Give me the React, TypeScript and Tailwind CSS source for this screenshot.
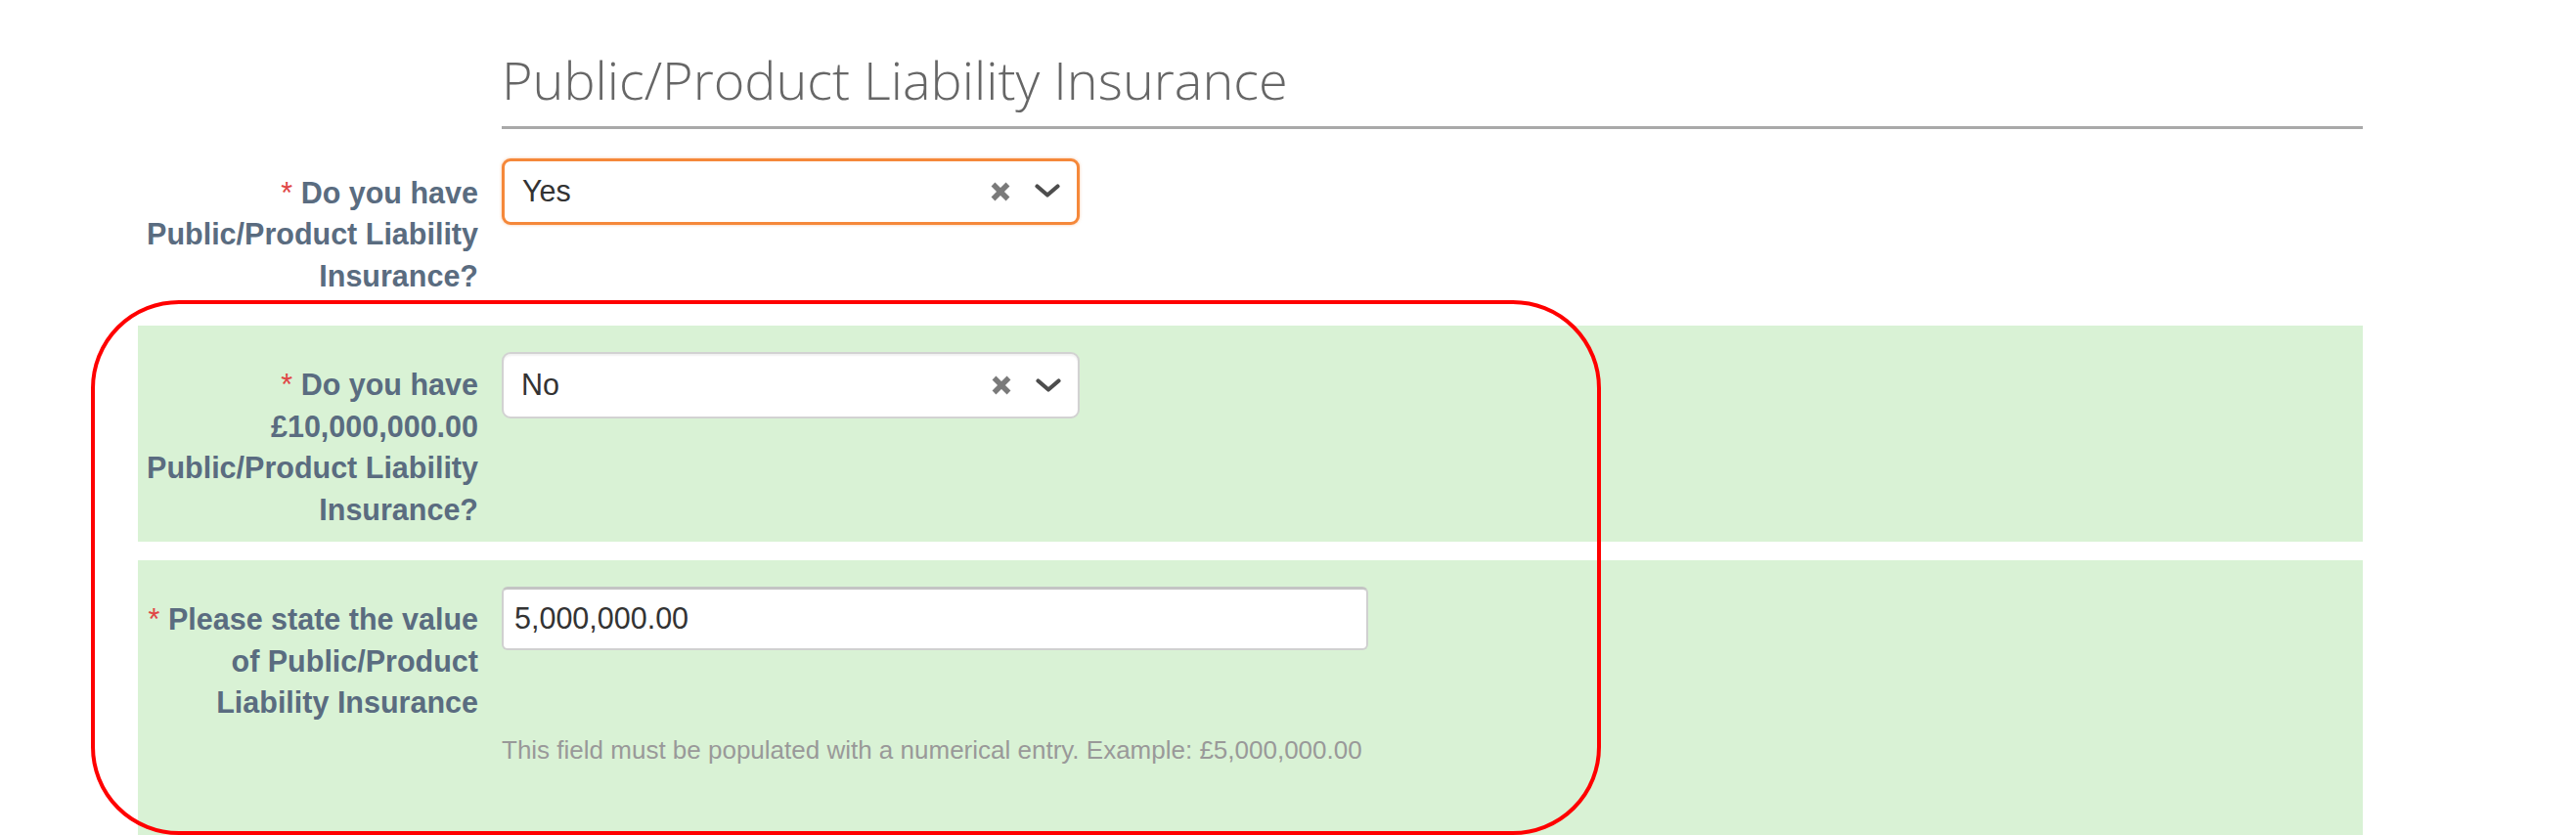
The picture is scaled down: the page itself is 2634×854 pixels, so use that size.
const LABEL = "text-right font-bold text-[30.5px] leading-[42.5px] text-[#5a6c80]";

function Required() {
  return <span className="text-[#e04646] font-normal">* </span>;
}

function ClearChevron() {
  return (
    <div className="ml-auto flex items-center gap-[24px]">
      <svg width="22" height="22" viewBox="0 0 22 22" className="text-[#7a7a7a]">
        <path d="M3.5 3.5 L18.5 18.5 M18.5 3.5 L3.5 18.5" stroke="currentColor" strokeWidth="5.5" />
      </svg>
      <svg width="26" height="15" viewBox="0 0 26 15" className="text-[#4d4d4d]">
        <path d="M2.5 2.5 L13 11.5 L23.5 2.5" stroke="currentColor" strokeWidth="4.2" fill="none" strokeLinecap="round" strokeLinejoin="round" />
      </svg>
    </div>
  );
}

function SelectBox({ value, focused }: { value: string; focused?: boolean }) {
  return (
    <div
      className={`flex h-[68px] w-[591px] items-center rounded-[9px] bg-white pl-[18px] pr-[17px] text-[30.5px] text-[#333] ${
        focused
          ? 'border-[3px] border-[#f5883a] shadow-[0_0_3px_rgba(245,136,58,0.5)]'
          : 'border-2 border-[#d2d2d2] shadow-[inset_0_2px_2px_rgba(0,0,0,0.06)]'
      }`}
    >
      <span>{value}</span>
      <ClearChevron />
    </div>
  );
}

export default function App() {
  return (
    <div className="relative h-[854px] w-full overflow-hidden bg-white font-['Liberation_Sans',Arial,sans-serif]">
      <div className="ml-[141px] w-[2275px]">
        {/* tail of the previous field */}
        <div className="-mt-[32px] grid grid-cols-[348px_1fr] gap-x-[24px]">
          <div className={LABEL}>Insurance?</div>
        </div>

        {/* section heading */}
        <div className="mt-[40px] grid grid-cols-[348px_1fr] gap-x-[24px]">
          <div />
          <h2 className="border-b-[3px] border-[#a9a9a9] pb-[18px] font-['Open_Sans',sans-serif] text-[54px] font-light leading-[60px] text-[#666]">
            Public/Product Liability Insurance
          </h2>
        </div>

        {/* row 1 */}
        <div className="mt-[30px] grid grid-cols-[348px_1fr] items-start gap-x-[24px]">
          <div className={`${LABEL} mt-[14px]`}>
            <Required />
            Do you have Public/Product Liability Insurance?
          </div>
          <SelectBox value="Yes" focused />
        </div>

        {/* row 2 */}
        <div className="mt-[30px] grid grid-cols-[348px_1fr] items-start gap-x-[24px] bg-[#d9f2d5] pt-[27px] pb-[12px]">
          <div className={`${LABEL} mt-[12px]`}>
            <Required />
            Do you have £10,000,000.00 Public/Product Liability Insurance?
          </div>
          <SelectBox value="No" />
        </div>

        {/* row 3 */}
        <div className="mt-[19px] bg-[#d9f2d5] pt-[27px] pb-[120px]">
          <div className="grid grid-cols-[348px_1fr] items-start gap-x-[24px]">
            <div className={`${LABEL} mt-[12px]`}>
              <Required />
              Please state the value of Public/Product Liability Insurance
            </div>
            <div className="flex h-[65px] w-[886px] items-center rounded-[6px] border-2 border-[#d0d0d0] border-t-[3px] border-t-[#c4c4c4] bg-white pl-[11px] text-[30.5px] text-[#333]">
              5,000,000.00
            </div>
          </div>
          <div className="mt-[12px] grid grid-cols-[348px_1fr] gap-x-[24px]">
            <div />
            <div className="text-[26px] leading-[30px] text-[#999]">
              This field must be populated with a numerical entry. Example: £5,000,000.00
            </div>
          </div>
        </div>
      </div>

      {/* annotation */}
      <div className="pointer-events-none absolute left-[93px] top-[307px] h-[547px] w-[1544px] rounded-[90px] border-4 border-[#ff0000]" />
    </div>
  );
}
